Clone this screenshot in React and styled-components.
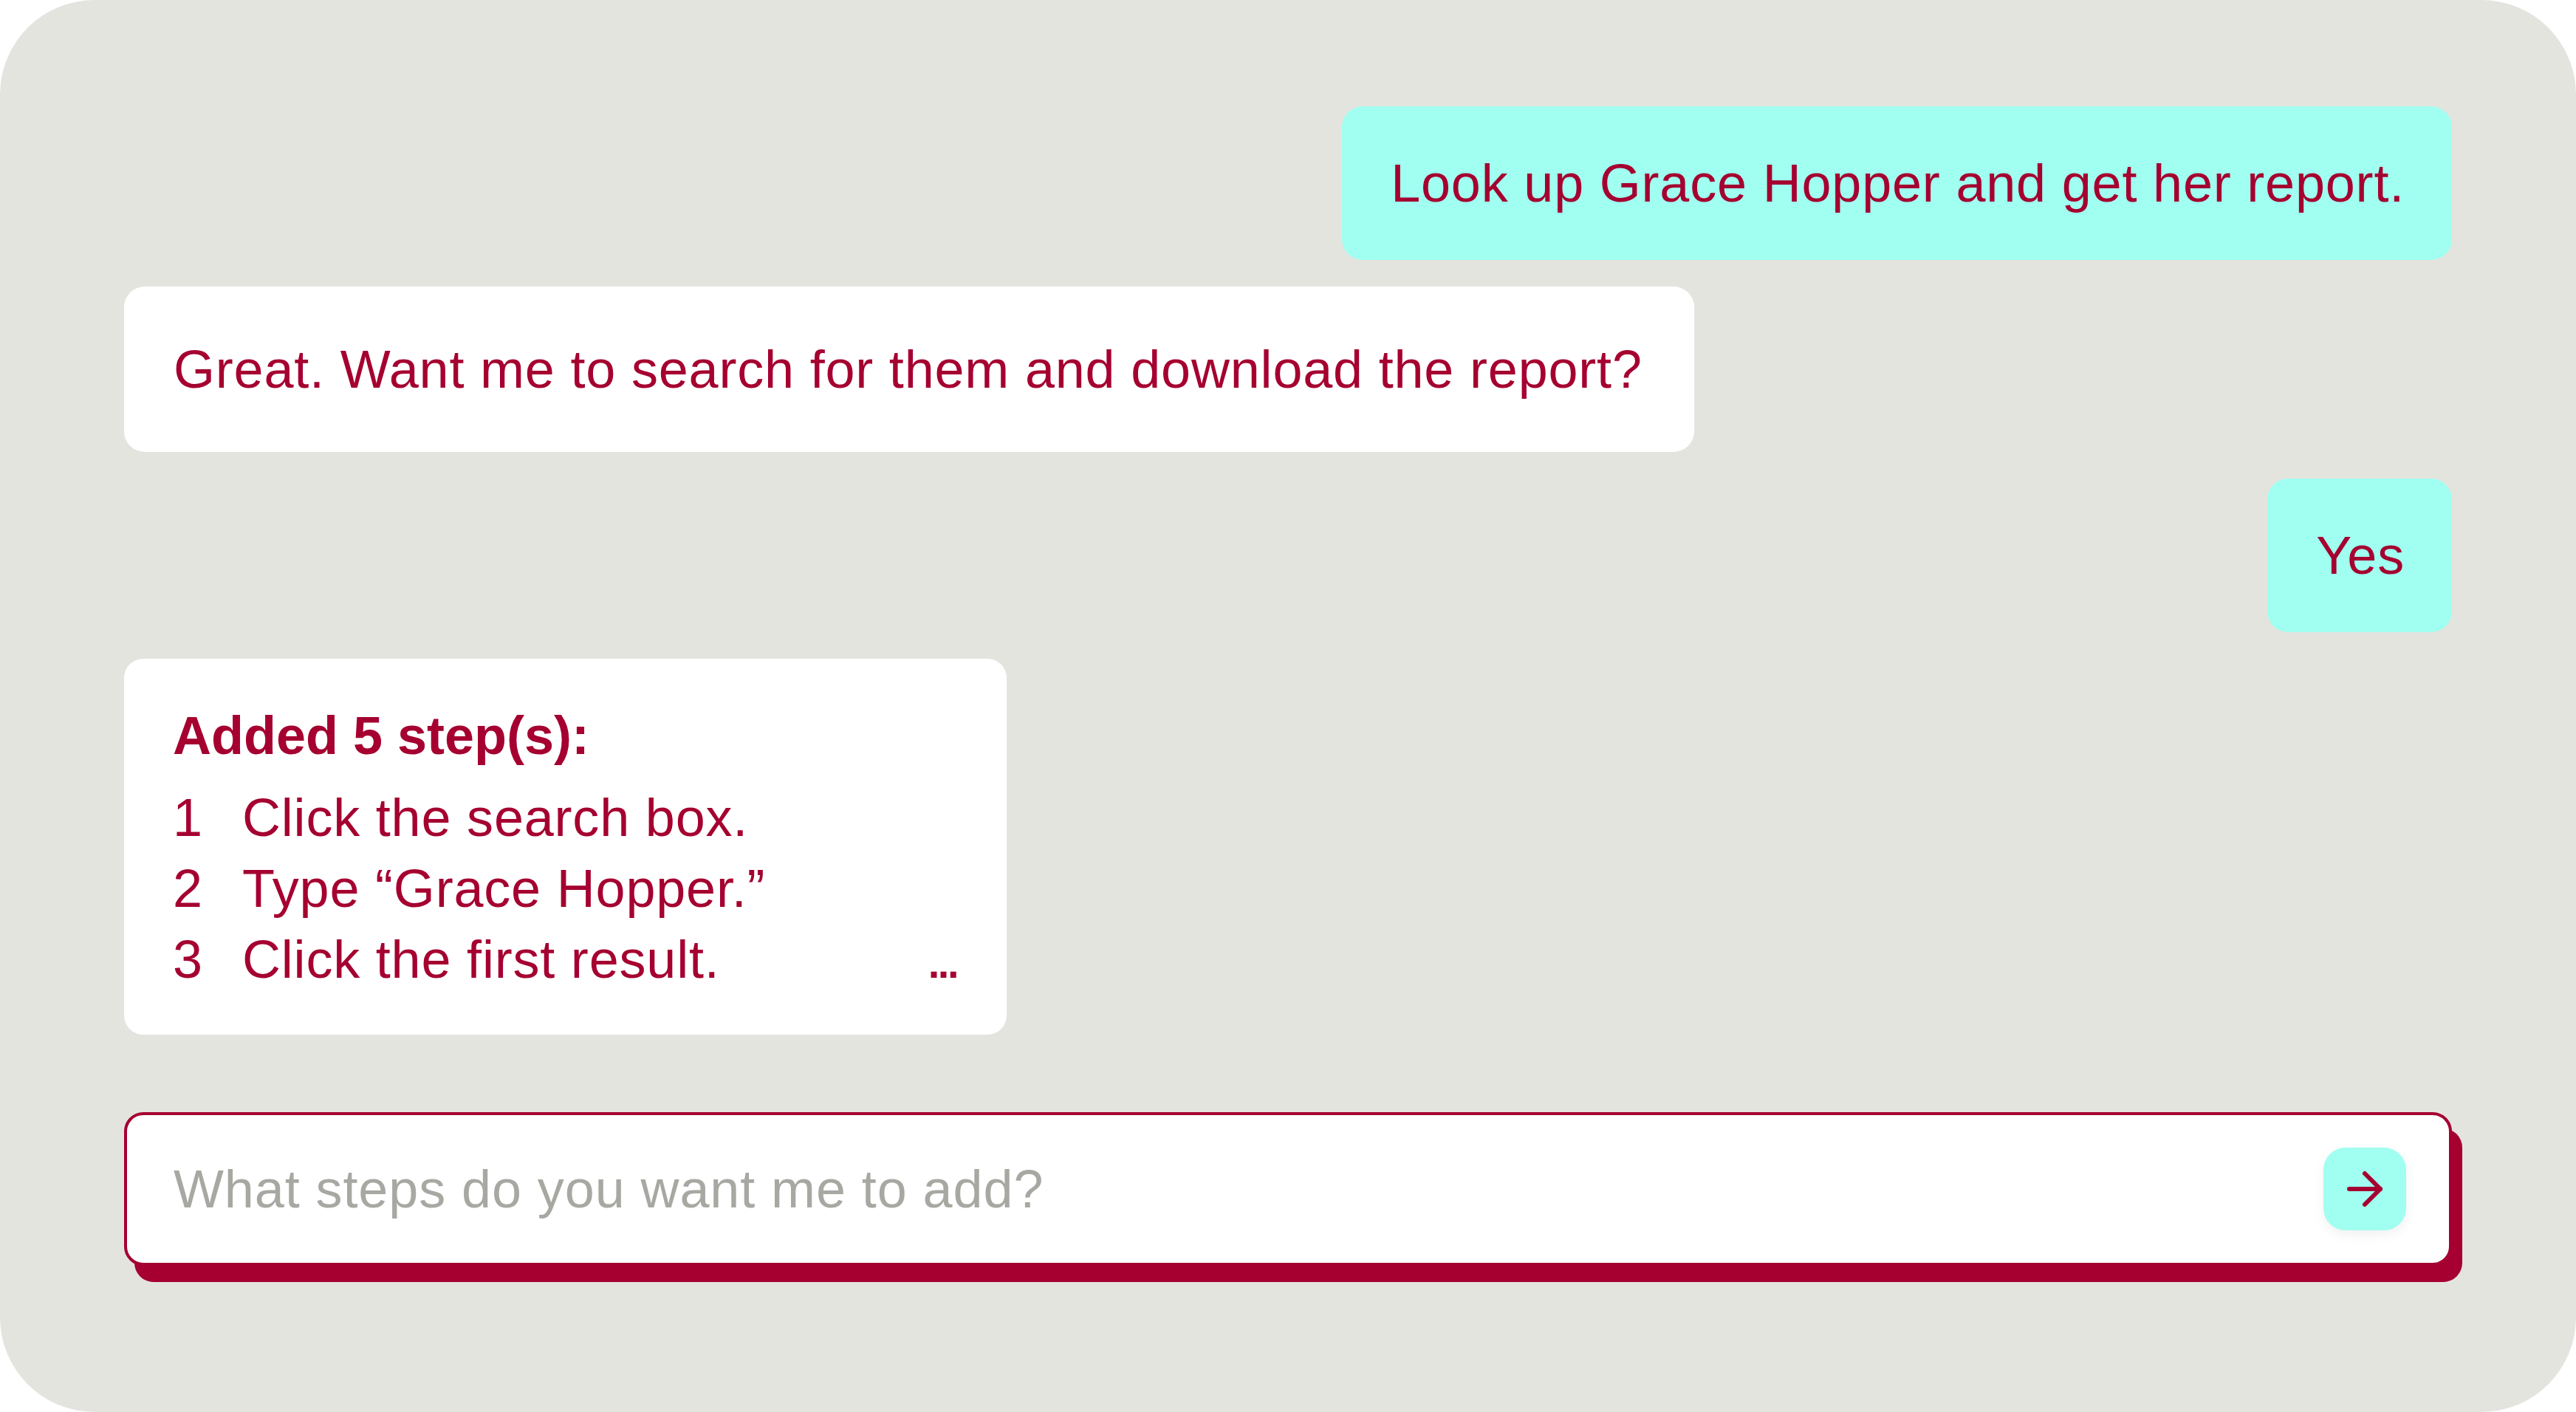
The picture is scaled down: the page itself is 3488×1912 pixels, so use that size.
import React from 'react';
import styled, {createGlobalStyle} from 'styled-components';
import {ArrowRight} from 'lucide-react';

const RED = '#a50030';
const MINT = '#a0fff0';

const GlobalStyle = createGlobalStyle`
body{
    margin: 0;
    background: #ffffff;
    font-family: "Liberation Sans", Arial, sans-serif;
}
*{
    box-sizing: border-box;
}
`;

const Panel = styled.div`
width: 100%;
height: 1912px;
background-color: #e4e4df;
border-radius: 128px;
padding: 144px 168px 0;
display: flex;
flex-direction: column;
gap: 36px;
overflow: hidden;
`;

const Bubble = styled.div`
align-self: ${({$from}) => ($from === 'user' ? 'flex-end' : 'flex-start')};
background-color: ${({$from}) => ($from === 'user' ? MINT : '#ffffff')};
padding: ${({$from}) => ($from === 'user' ? '60px 64px 60px 66px' : '68px 70px 68px 67px')};
border-radius: 28px;
color: ${RED};
font-size: 72px;
line-height: 88px;
letter-spacing: 0.8px;
white-space: nowrap;
`;

const StepsCard = styled.div`
align-self: flex-start;
width: 1195px;
background-color: #ffffff;
border-radius: 26px;
padding: 60px 67px 52px 66px;
color: ${RED};
font-size: 72px;
line-height: 88px;
letter-spacing: 0.8px;
`;

const Heading = styled.div`
font-weight: 700;
letter-spacing: 0;
`;

const StepList = styled.ol`
list-style: none;
margin: 23px 0 0;
padding: 0;
display: grid;
gap: 8px;
`;

const StepRow = styled.li`
display: grid;
grid-template-columns: 94px 1fr auto;
align-items: baseline;
`;

const More = styled.span`
font-size: 56px;
font-weight: 700;
letter-spacing: -2.5px;
`;

const Composer = styled.form`
margin-top: 69px;
height: 208px;
background-color: #ffffff;
border: 4px solid ${RED};
border-radius: 26px;
box-shadow: 14px 22px 0 0 ${RED};
display: flex;
align-items: center;
padding: 0 58px 0 63px;
`;

const Input = styled.input`
flex: 1;
border: none;
outline: none;
background: transparent;
font-family: "Liberation Sans", Arial, sans-serif;
font-size: 72px;
line-height: 88px;
letter-spacing: 0.9px;
color: ${RED};
padding: 0;
&::placeholder{
    color: #a8a8a3;
}
`;

const SendButton = styled.button`
width: 112px;
height: 112px;
border: none;
border-radius: 30px;
background-color: ${MINT};
box-shadow: 0 6px 16px rgb(0 0 0 / 6%);
display: flex;
align-items: center;
justify-content: center;
padding: 0;
color: ${RED};
`;

const steps = [
    'Click the search box.',
    'Type \u201cGrace Hopper.\u201d',
    'Click the first result.',
];

const App = () => {
    return(
        <>
          <GlobalStyle/>
          <Panel>
            <Bubble $from='user'>Look up Grace Hopper and get her report.</Bubble>
            <Bubble $from='bot'>Great. Want me to search for them and download the report?</Bubble>
            <Bubble $from='user'>Yes</Bubble>
            <StepsCard>
              <Heading>Added 5 step(s):</Heading>
              <StepList>
                {steps.map((s, i) => (
                    <StepRow key={i}>
                      <span>{i + 1}</span>
                      <span>{s}</span>
                      {i === steps.length - 1 ? <More>...</More> : <span/>}
                    </StepRow>
                ))}
              </StepList>
            </StepsCard>
            <Composer onSubmit={e => e.preventDefault()}>
              <Input placeholder='What steps do you want me to add?'/>
              <SendButton type='submit'>
                <ArrowRight size={72} strokeWidth={2}/>
              </SendButton>
            </Composer>
          </Panel>
        </>
    )
};

export default App;
